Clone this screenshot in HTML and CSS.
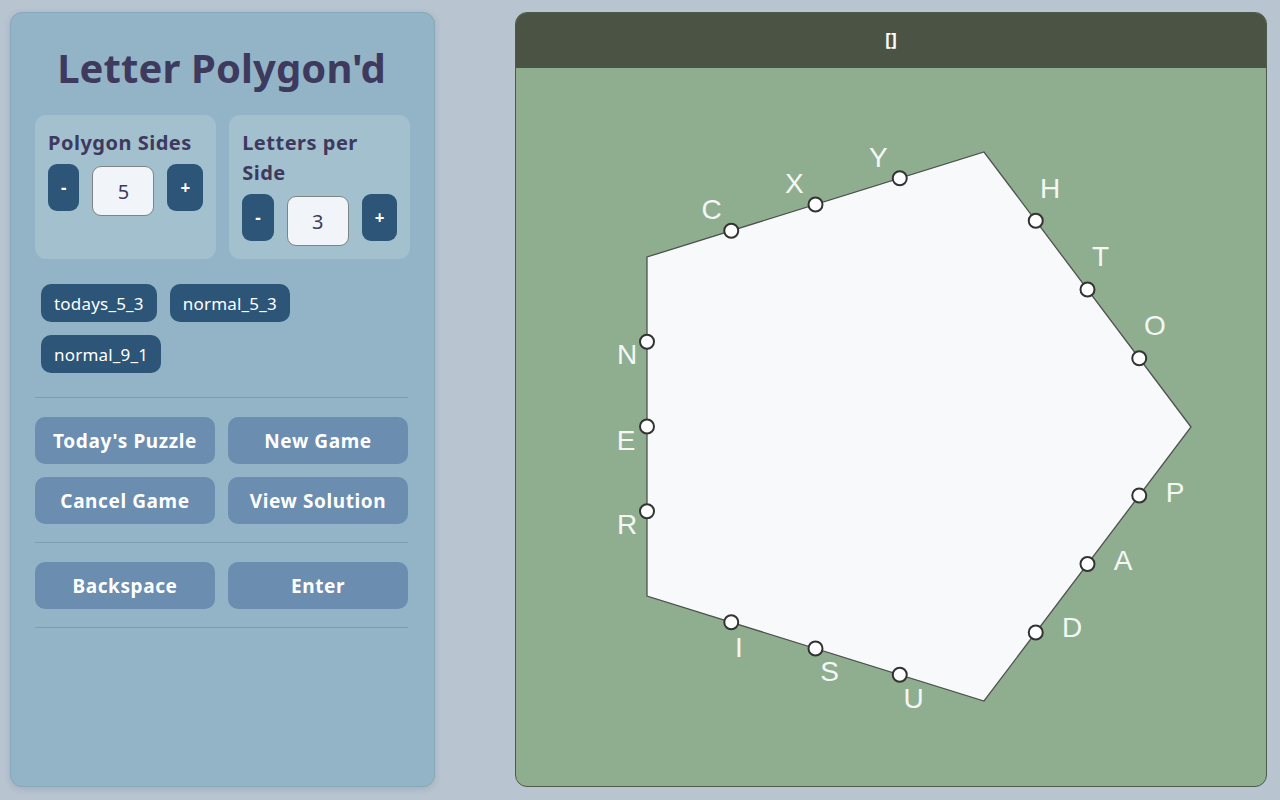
FILE: index.html
```html
<!DOCTYPE html>
<html lang="en">
<head>
<meta charset="utf-8">
<title>Letter Polygon'd</title>
<link rel="stylesheet" href="styles.css">
</head>
<body>
<div class="app">
  <aside class="panel">
    <h1 class="title">Letter Polygon'd</h1>
    <div class="settings">
      <div class="setting">
        <div class="setting-label">Polygon Sides</div>
        <div class="stepper">
          <button class="step">-</button>
          <input class="step-value" type="text" value="5">
          <button class="step">+</button>
        </div>
      </div>
      <div class="setting">
        <div class="setting-label">Letters per Side</div>
        <div class="stepper">
          <button class="step">-</button>
          <input class="step-value" type="text" value="3">
          <button class="step">+</button>
        </div>
      </div>
    </div>
    <div class="chips">
      <button class="chip">todays_5_3</button>
      <button class="chip">normal_5_3</button>
      <button class="chip">normal_9_1</button>
    </div>
    <hr class="divider">
    <div class="actions">
      <button class="action">Today's Puzzle</button>
      <button class="action">New Game</button>
      <button class="action">Cancel Game</button>
      <button class="action">View Solution</button>
    </div>
    <hr class="divider">
    <div class="actions">
      <button class="action">Backspace</button>
      <button class="action">Enter</button>
    </div>
    <hr class="divider">
  </aside>

  <main class="board">
    <header class="board-head">[]</header>
    <div class="board-body">
      <svg class="board-svg" width="100%" height="100%">
        <g transform="translate(-516,-68)">
          <polygon class="shape" points="1191,427 984,152 647,257 647,596 984,701"/>
          <g class="dots">
            <circle cx="1139.25" cy="358.25" r="7"/>
            <circle cx="1087.5" cy="289.5" r="7"/>
            <circle cx="1035.75" cy="220.75" r="7"/>
            <circle cx="899.75" cy="178.25" r="7"/>
            <circle cx="815.5" cy="204.5" r="7"/>
            <circle cx="731.25" cy="230.75" r="7"/>
            <circle cx="647" cy="341.75" r="7"/>
            <circle cx="647" cy="426.5" r="7"/>
            <circle cx="647" cy="511.25" r="7"/>
            <circle cx="731.25" cy="622.25" r="7"/>
            <circle cx="815.5" cy="648.5" r="7"/>
            <circle cx="899.75" cy="674.75" r="7"/>
            <circle cx="1035.75" cy="632.5" r="7"/>
            <circle cx="1087.5" cy="564" r="7"/>
            <circle cx="1139.25" cy="495.5" r="7"/>
          </g>
          <g class="letters">
            <text x="1155" y="335.3">O</text>
            <text x="1100.5" y="266">T</text>
            <text x="1050" y="198.3">H</text>
            <text x="878.3" y="166.7">Y</text>
            <text x="794.3" y="193.3">X</text>
            <text x="711.7" y="218.8">C</text>
            <text x="627" y="364">N</text>
            <text x="626" y="450">E</text>
            <text x="627" y="534.3">R</text>
            <text x="739" y="657">I</text>
            <text x="829.5" y="681">S</text>
            <text x="913.7" y="707.5">U</text>
            <text x="1072" y="636.7">D</text>
            <text x="1123" y="570">A</text>
            <text x="1175" y="501.7">P</text>
          </g>
        </g>
      </svg>
    </div>
  </main>
</div>
</body>
</html>
```

FILE: styles.css
```css
* { box-sizing: border-box; }

html, body {
  margin: 0;
  padding: 0;
  background: #b8c4d0;
  font-family: "Noto Sans", "Open Sans", sans-serif;
}

.app {
  display: flex;
  gap: 80px;
  padding: 12px 13px 13px 10px;
  height: 800px;
}

.panel {
  width: 425px;
  flex: none;
  background: #93b4c6;
  border: 1px solid #86a8bb;
  border-radius: 12px;
  box-shadow: 0 2px 6px rgba(60, 80, 100, 0.18);
  padding: 25px 26px 25px 24px;
  display: flex;
  flex-direction: column;
}

.title {
  margin: 0;
  font-size: 40px;
  line-height: 60px;
  font-weight: 700;
  color: #3e3a5e;
  text-align: center;
  letter-spacing: 0.1px;
}

.settings {
  margin-top: 17px;
  display: grid;
  grid-template-columns: 1fr 1fr;
  gap: 13px;
}

.setting {
  background: #a3c0cf;
  border-radius: 11px;
  padding: 13px;
}

.setting-label {
  font-size: 20px;
  line-height: 30px;
  font-weight: 700;
  color: #3e3a5e;
  letter-spacing: 0.5px;
}

.stepper {
  margin-top: 6px;
  display: flex;
  align-items: flex-start;
  gap: 13px;
}

.step {
  height: 47px;
  padding: 0 13px;
  border: none;
  border-radius: 9px;
  background: #2c5578;
  color: #ffffff;
  font-family: inherit;
  font-size: 17px;
  font-weight: 700;
}

.step-value {
  width: 62px;
  height: 50px;
  margin-top: 2px;
  border: 1px solid #7d8583;
  border-radius: 9px;
  background: #f1f5f9;
  color: #3e3a5e;
  font-family: inherit;
  font-size: 20px;
  text-align: center;
  padding: 0;
}

.chips {
  margin-top: 19px;
  padding: 6px;
  display: flex;
  flex-wrap: wrap;
  gap: 13px;
}

.chip {
  height: 38px;
  padding: 0 13px;
  border: none;
  border-radius: 10px;
  background: #2c5578;
  color: #ffffff;
  font-family: inherit;
  font-size: 17px;
  letter-spacing: 0.2px;
}

.divider {
  margin: 18px 0 19px;
  border: none;
  border-top: 1px solid #7a9db3;
  height: 0;
}

.actions {
  display: grid;
  grid-template-columns: 1fr 1fr;
  gap: 13px;
}

.action {
  height: 47px;
  border: none;
  border-radius: 10px;
  background: #6a8db0;
  color: #ffffff;
  font-family: inherit;
  font-size: 19px;
  font-weight: 700;
  letter-spacing: 0.6px;
}

.board {
  flex: 1;
  display: flex;
  flex-direction: column;
  border: 1px solid #4e5a4a;
  border-radius: 12px;
  overflow: hidden;
  background: #8fae90;
}

.board-head {
  height: 55px;
  flex: none;
  background: #4b5444;
  color: #ffffff;
  font-size: 18px;
  line-height: 1;
  font-weight: 700;
  display: flex;
  align-items: center;
  justify-content: center;
  padding-bottom: 3px;
}

.board-body {
  flex: 1;
  position: relative;
}

.board-svg {
  display: block;
  overflow: visible;
}

.shape {
  fill: #f8f9fb;
  stroke: #4f524f;
  stroke-width: 1.3;
}

.dots circle {
  fill: #ffffff;
  stroke: #333333;
  stroke-width: 2;
}

.letters text {
  font-family: "Liberation Sans", Arial, sans-serif;
  font-size: 28px;
  fill: #f4f7f4;
  text-anchor: middle;
}
```
